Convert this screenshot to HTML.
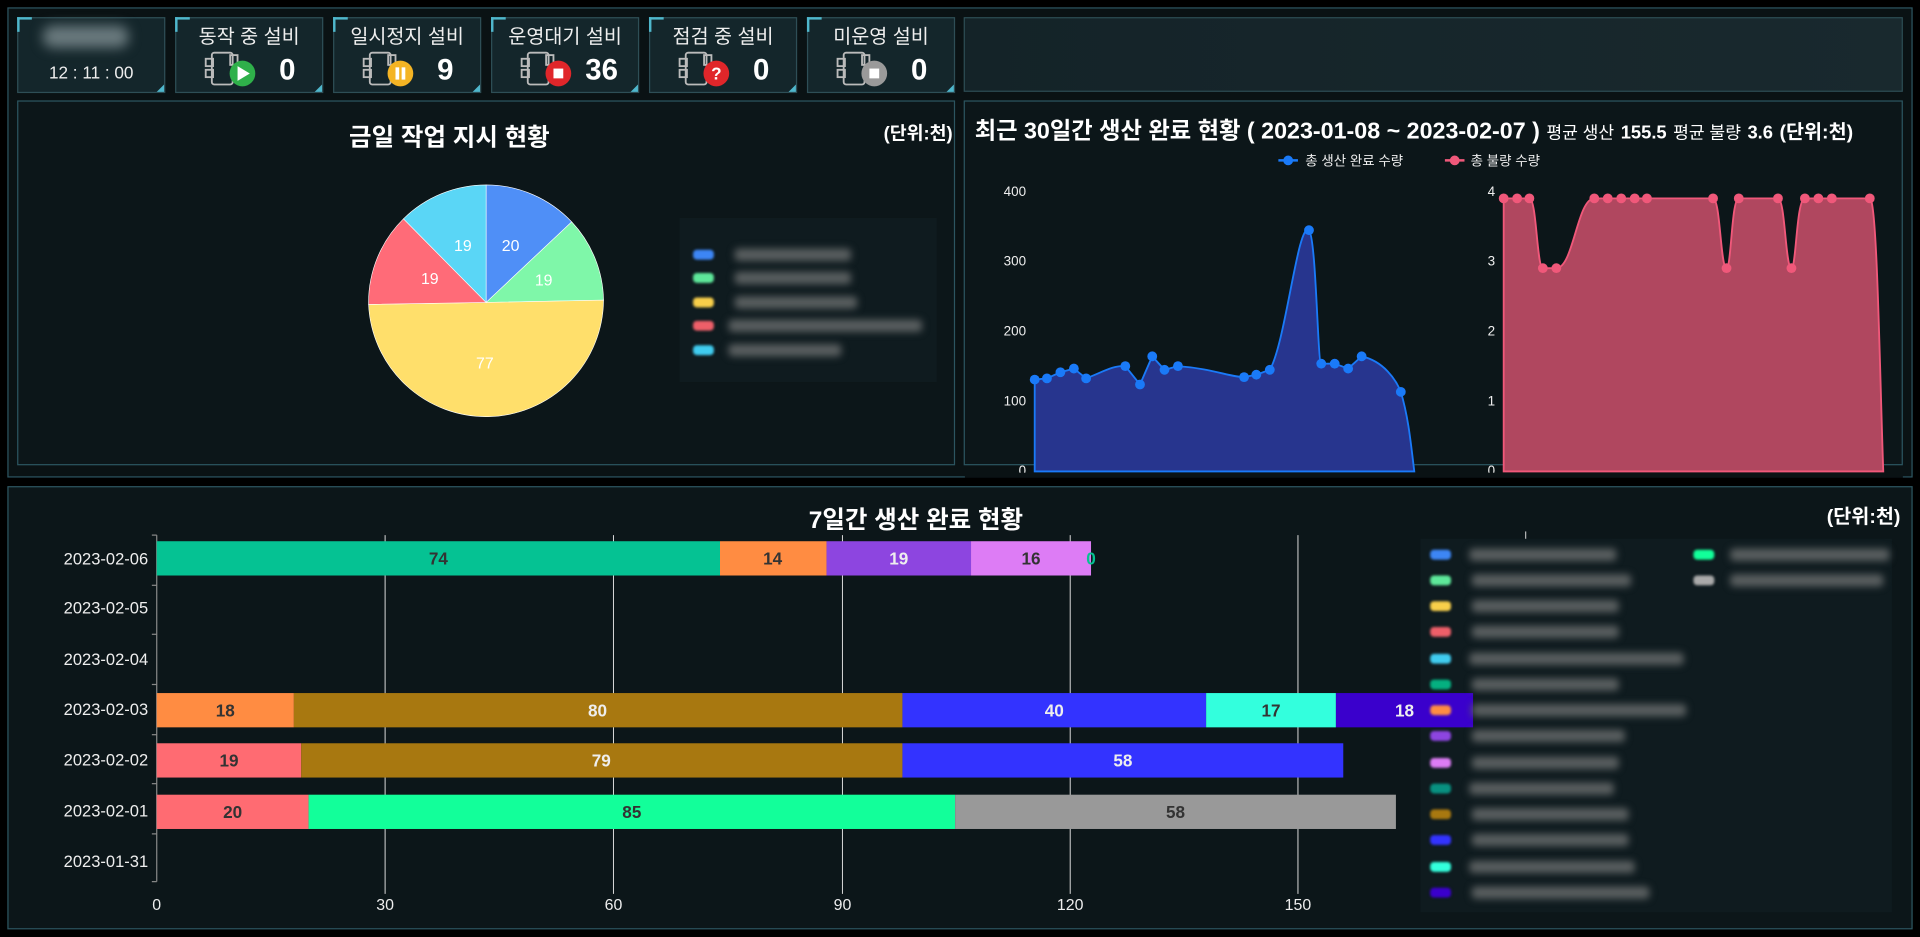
<!DOCTYPE html>
<html><head><meta charset="utf-8"><style>
*{margin:0;padding:0;box-sizing:border-box}
html,body{width:1920px;height:937px;overflow:hidden;background:#000}
#root{position:absolute;left:0;top:0;width:1568px;height:765px;transform:scale(1.22449);transform-origin:0 0;font-family:"Liberation Sans","Noto Sans CJK KR",sans-serif;color:#fff}
.abs{position:absolute}
.panel{position:absolute;border:1px solid #2c5560;background:#0c1619}
.card{position:absolute;top:14px;height:62px;border:1px solid #2e4e56;background:#14262b}
.card:before{content:"";position:absolute;left:-1px;top:-1px;width:10px;height:10px;border-left:2px solid #4fb7cc;border-top:2px solid #4fb7cc}
.card:after{content:"";position:absolute;right:0;bottom:0;border-style:solid;border-width:0 0 6px 6px;border-color:transparent transparent #4fb7cc transparent}
.ct{position:absolute;left:0;right:0;top:1px;text-align:center;font-size:16px;color:#eee}
.cn{position:absolute;top:29px;font-size:24px;font-weight:bold}
.blur{filter:blur(3px);background:#5a5f60;height:10px;border-radius:3px;position:absolute}
.sw{position:absolute;width:17px;height:8px;border-radius:3px;filter:blur(1px)}
</style></head><body><div id="root">
<div class="panel" style="left:6px;top:6px;width:1556px;height:384px;background:#0a1214"></div>
<div class="card" style="left:14px;width:121px">
<div class="abs" style="left:20px;top:6px;width:70px;height:18px;background:#6a7a7e;filter:blur(5px);border-radius:8px"></div>
<div class="abs" style="left:0;right:0;top:36px;text-align:center;font-size:14px;color:#eee">12 : 11 : 00</div></div>
<div class="card" style="left:143px;width:121px"><div class="ct">동작 중 설비</div>
<svg class="abs" style="left:22px;top:26px" width="46" height="32"><g fill="none" stroke="#bbb" stroke-width="1.5"><rect x="7" y="2" width="17" height="26" rx="2"/><rect x="2" y="7" width="6" height="6"/><rect x="2" y="16" width="6" height="6"/><rect x="22" y="4" width="6" height="8"/></g><circle cx="32" cy="19" r="10.5" fill="#2fb04a"/><path d="M28 13 L38 19 L28 25Z" fill="#fff"/></svg><div class="cn" style="left:84px">0</div></div>
<div class="card" style="left:272px;width:121px"><div class="ct">일시정지 설비</div>
<svg class="abs" style="left:22px;top:26px" width="46" height="32"><g fill="none" stroke="#bbb" stroke-width="1.5"><rect x="7" y="2" width="17" height="26" rx="2"/><rect x="2" y="7" width="6" height="6"/><rect x="2" y="16" width="6" height="6"/><rect x="22" y="4" width="6" height="8"/></g><circle cx="32" cy="19" r="10.5" fill="#f4b424"/><rect x="28" y="14" width="3" height="10" fill="#fff"/><rect x="33" y="14" width="3" height="10" fill="#fff"/></svg><div class="cn" style="left:84px">9</div></div>
<div class="card" style="left:401px;width:121px"><div class="ct">운영대기 설비</div>
<svg class="abs" style="left:22px;top:26px" width="46" height="32"><g fill="none" stroke="#bbb" stroke-width="1.5"><rect x="7" y="2" width="17" height="26" rx="2"/><rect x="2" y="7" width="6" height="6"/><rect x="2" y="16" width="6" height="6"/><rect x="22" y="4" width="6" height="8"/></g><circle cx="32" cy="19" r="10.5" fill="#e0262a"/><rect x="28" y="15" width="8" height="8" fill="#fff"/></svg><div class="cn" style="left:76px">36</div></div>
<div class="card" style="left:530px;width:121px"><div class="ct">점검 중 설비</div>
<svg class="abs" style="left:22px;top:26px" width="46" height="32"><g fill="none" stroke="#bbb" stroke-width="1.5"><rect x="7" y="2" width="17" height="26" rx="2"/><rect x="2" y="7" width="6" height="6"/><rect x="2" y="16" width="6" height="6"/><rect x="22" y="4" width="6" height="8"/></g><circle cx="32" cy="19" r="10.5" fill="#e0262a"/><text x="32" y="24" font-size="14" font-weight="bold" fill="#fff" text-anchor="middle" font-family="Liberation Sans">?</text></svg><div class="cn" style="left:84px">0</div></div>
<div class="card" style="left:659px;width:121px"><div class="ct">미운영 설비</div>
<svg class="abs" style="left:22px;top:26px" width="46" height="32"><g fill="none" stroke="#bbb" stroke-width="1.5"><rect x="7" y="2" width="17" height="26" rx="2"/><rect x="2" y="7" width="6" height="6"/><rect x="2" y="16" width="6" height="6"/><rect x="22" y="4" width="6" height="8"/></g><circle cx="32" cy="19" r="10.5" fill="#9a9a9a"/><rect x="28" y="15" width="8" height="8" fill="#fff"/></svg><div class="cn" style="left:84px">0</div></div>
<div class="abs" style="left:787px;top:14px;width:767px;height:61px;border:1px solid #2e4e56;background:linear-gradient(90deg,#142328,#19292e)"></div>

<div class="panel" style="left:14px;top:82px;width:766px;height:298px"></div>
<div class="abs" style="left:14px;width:706px;top:96px;text-align:center;font-size:20px;font-weight:bold">금일 작업 지시 현황</div>
<div class="abs" style="right:790px;top:98px;font-size:15px;font-weight:bold">(단위:천)</div>
<svg class="abs" style="left:0;top:0" width="800" height="380">
<g transform="translate(397,247)" stroke="#fff" stroke-width="0.5">
<path d="M0 0 L0 -96 A96 96 0 0 1 69.9 -65.8Z" fill="#4f8ff7"/>
<path d="M0 0 L69.9 -65.8 A96 96 0 0 1 95.9 -1.9Z" fill="#7ff7a9"/>
<path d="M0 0 L95.9 -1.9 A96 96 0 0 1 -96 1.6Z" fill="#ffdf6b"/>
<path d="M0 0 L-96 1.6 A96 96 0 0 1 -67.5 -68.3Z" fill="#ff6b78"/>
<path d="M0 0 L-67.5 -68.3 A96 96 0 0 1 0 -96Z" fill="#5ad6f6"/>
</g>
<g font-size="13" fill="#fff" text-anchor="middle" font-family="Liberation Sans"><text x="417" y="205">20</text><text x="444" y="233">19</text><text x="396" y="301">77</text><text x="351" y="232">19</text><text x="378" y="205">19</text></g>
</svg>
<div class="abs" style="left:555px;top:178px;width:210px;height:134px;background:#0f1b1f"></div>
<div class="sw" style="left:566px;top:204px;background:#3d86f5"></div><div class="blur" style="left:600px;top:203px;width:95px"></div>
<div class="sw" style="left:566px;top:223px;background:#5ee89a"></div><div class="blur" style="left:600px;top:222px;width:95px"></div>
<div class="sw" style="left:566px;top:243px;background:#f8cf4a"></div><div class="blur" style="left:600px;top:242px;width:100px"></div>
<div class="sw" style="left:566px;top:262px;background:#ee5f69"></div><div class="blur" style="left:595px;top:261px;width:158px"></div>
<div class="sw" style="left:566px;top:282px;background:#40ccef"></div><div class="blur" style="left:595px;top:281px;width:92px"></div>

<div class="panel" style="left:787px;top:82px;width:767px;height:298px"></div>
<div class="abs" style="left:796px;top:92px;font-size:19px;font-weight:bold;white-space:nowrap">최근 30일간 생산 완료 현황 ( 2023-01-08 ~ 2023-02-07 ) <span style="font-size:14px;font-weight:normal">평균 생산</span> <span style="font-size:15px">155.5</span> <span style="font-size:14px;font-weight:normal">평균 불량</span> <span style="font-size:15px">3.6</span> <span style="font-size:16px">(단위:천)</span></div>
<svg class="abs" style="left:0;top:0" width="1568" height="390">
<g font-size="11" fill="#eee" font-family="Liberation Sans"><line x1="1044" y1="131" x2="1060" y2="131" stroke="#1a7af8" stroke-width="2"/><circle cx="1052" cy="131" r="4" fill="#1a7af8"/><text x="1066" y="135">총 생산 완료 수량</text>
<line x1="1180" y1="131" x2="1196" y2="131" stroke="#f0587a" stroke-width="2"/><circle cx="1188" cy="131" r="4" fill="#f0587a"/><text x="1201" y="135">총 불량 수량</text>
<g text-anchor="end"><text x="838" y="160">400</text><text x="838" y="217">300</text><text x="838" y="274">200</text><text x="838" y="331">100</text><text x="838" y="388">0</text>
<text x="1221" y="160">4</text><text x="1221" y="217">3</text><text x="1221" y="274">2</text><text x="1221" y="331">1</text><text x="1221" y="388">0</text></g></g>
<path d="M845 310 L855 309 L866 304 L877 301 L887 309 C900 304 910 298 919 299 L931 314 L941 291 L951 302 L962 299 C990 301 1005 308 1016 308 L1026 306 L1037 302 C1050 280 1060 180 1069 188 C1075 195 1076 297 1079 297 L1090 297 L1101 301 L1112 291 C1130 295 1140 310 1144 320 C1150 340 1152 360 1155 385 L845 385Z" fill="#27358e" stroke="#1a7af8" stroke-width="1.5"/>
<g fill="#1a7af8"><circle cx="845" cy="310" r="4"/><circle cx="855" cy="309" r="4"/><circle cx="866" cy="304" r="4"/><circle cx="877" cy="301" r="4"/><circle cx="887" cy="309" r="4"/><circle cx="919" cy="299" r="4"/><circle cx="931" cy="314" r="4"/><circle cx="941" cy="291" r="4"/><circle cx="951" cy="302" r="4"/><circle cx="962" cy="299" r="4"/><circle cx="1016" cy="308" r="4"/><circle cx="1026" cy="306" r="4"/><circle cx="1037" cy="302" r="4"/><circle cx="1069" cy="188" r="4"/><circle cx="1079" cy="297" r="4"/><circle cx="1090" cy="297" r="4"/><circle cx="1101" cy="301" r="4"/><circle cx="1112" cy="291" r="4"/><circle cx="1144" cy="320" r="4"/></g>
<path d="M1228 162 L1249 162 C1255 162 1255 219 1260 219 L1271 219 C1285 219 1288 162 1302 162 L1399 162 C1405 162 1405 219 1410 219 C1414 219 1414 162 1420 162 L1452 162 C1458 162 1458 219 1463 219 C1467 219 1467 162 1474 162 L1527 162 C1533 162 1535 300 1538 385 L1228 385Z" fill="#b0475f" stroke="#f0587a" stroke-width="1.5"/>
<g fill="#f0587a"><circle cx="1228" cy="162" r="4"/><circle cx="1239" cy="162" r="4"/><circle cx="1249" cy="162" r="4"/><circle cx="1260" cy="219" r="4"/><circle cx="1271" cy="219" r="4"/><circle cx="1302" cy="162" r="4"/><circle cx="1313" cy="162" r="4"/><circle cx="1324" cy="162" r="4"/><circle cx="1335" cy="162" r="4"/><circle cx="1345" cy="162" r="4"/><circle cx="1399" cy="162" r="4"/><circle cx="1410" cy="219" r="4"/><circle cx="1420" cy="162" r="4"/><circle cx="1452" cy="162" r="4"/><circle cx="1463" cy="219" r="4"/><circle cx="1474" cy="162" r="4"/><circle cx="1485" cy="162" r="4"/><circle cx="1496" cy="162" r="4"/><circle cx="1527" cy="162" r="4"/></g>
<rect x="788" y="386" width="766" height="5" fill="#0a1214"/>
</svg>

<div class="panel" style="left:6px;top:397px;width:1556px;height:362px"></div>
<div class="abs" style="left:1160px;top:440px;width:385px;height:305px;background:#0f1b1f"></div>
<div class="abs" style="left:0;width:1496px;top:408px;text-align:center;font-size:20px;font-weight:bold">7일간 생산 완료 현황</div>
<div class="abs" style="right:16px;top:408px;font-size:16px;font-weight:bold">(단위:천)</div>
<svg class="abs" style="left:0;top:0" width="1568" height="765" font-family="Liberation Sans">
<g stroke="#ddd" stroke-width="0.8"><line x1="314.5" y1="437" x2="314.5" y2="730"/><line x1="501" y1="437" x2="501" y2="730"/><line x1="688" y1="437" x2="688" y2="730"/><line x1="874" y1="437" x2="874" y2="730"/><line x1="1060" y1="437" x2="1060" y2="730"/><line x1="1246" y1="434" x2="1246" y2="440"/></g>
<g stroke="#888"><line x1="128" y1="437" x2="128" y2="720"/><line x1="124" y1="437" x2="128" y2="437"/><line x1="124" y1="478" x2="128" y2="478"/><line x1="124" y1="518" x2="128" y2="518"/><line x1="124" y1="559" x2="128" y2="559"/><line x1="124" y1="600" x2="128" y2="600"/><line x1="124" y1="640" x2="128" y2="640"/><line x1="124" y1="681" x2="128" y2="681"/><line x1="124" y1="720" x2="128" y2="720"/></g>
<g font-size="13.5" fill="#eee" text-anchor="end"><text x="121" y="461">2023-02-06</text><text x="121" y="501">2023-02-05</text><text x="121" y="543">2023-02-04</text><text x="121" y="584">2023-02-03</text><text x="121" y="625">2023-02-02</text><text x="121" y="667">2023-02-01</text><text x="121" y="708">2023-01-31</text></g>
<g font-size="13" fill="#eee" text-anchor="middle"><text x="128" y="743">0</text><text x="314.5" y="743">30</text><text x="501" y="743">60</text><text x="688" y="743">90</text><text x="874" y="743">120</text><text x="1060" y="743">150</text></g>
<rect x="128" y="442" width="460" height="28" fill="#05c293"/><rect x="588" y="442" width="87" height="28" fill="#ff8c42"/><rect x="675" y="442" width="118" height="28" fill="#8d45e0"/><rect x="793" y="442" width="98" height="28" fill="#dd7cf5"/>
<rect x="128" y="566" width="112" height="28" fill="#ff8c42"/><rect x="240" y="566" width="497" height="28" fill="#a87810"/><rect x="737" y="566" width="248" height="28" fill="#3333ff"/><rect x="985" y="566" width="106" height="28" fill="#33ffdd"/><rect x="1091" y="566" width="112" height="28" fill="#3a00cc"/>
<rect x="128" y="607" width="118" height="28" fill="#ff6b72"/><rect x="246" y="607" width="491" height="28" fill="#a87810"/><rect x="737" y="607" width="360" height="28" fill="#3333ff"/>
<rect x="128" y="649" width="124" height="28" fill="#ff6b72"/><rect x="252" y="649" width="528" height="28" fill="#12ff9a"/><rect x="780" y="649" width="360" height="28" fill="#999"/>
<g font-size="14" font-weight="bold" text-anchor="middle"><text x="358" y="461" fill="#333">74</text><text x="631" y="461" fill="#333">14</text><text x="734" y="461" fill="#eee">19</text><text x="842" y="461" fill="#333">16</text><text x="891" y="461" fill="#05c293">0</text>
<text x="184" y="585" fill="#333">18</text><text x="488" y="585" fill="#eee">80</text><text x="861" y="585" fill="#eee">40</text><text x="1038" y="585" fill="#333">17</text><text x="1147" y="585" fill="#eee">18</text>
<text x="187" y="626" fill="#333">19</text><text x="491" y="626" fill="#eee">79</text><text x="917" y="626" fill="#eee">58</text>
<text x="190" y="668" fill="#333">20</text><text x="516" y="668" fill="#333">85</text><text x="960" y="668" fill="#333">58</text></g>
</svg>
<div class="sw" style="left:1168px;top:449px;background:#3d86f5"></div><div class="blur" style="left:1200px;top:448px;width:120px"></div>
<div class="sw" style="left:1168px;top:470px;background:#5ee89a"></div><div class="blur" style="left:1202px;top:469px;width:130px"></div>
<div class="sw" style="left:1168px;top:491px;background:#f8cf4a"></div><div class="blur" style="left:1202px;top:490px;width:120px"></div>
<div class="sw" style="left:1168px;top:512px;background:#ee5f69"></div><div class="blur" style="left:1202px;top:511px;width:120px"></div>
<div class="sw" style="left:1168px;top:534px;background:#40ccef"></div><div class="blur" style="left:1200px;top:533px;width:175px"></div>
<div class="sw" style="left:1168px;top:555px;background:#05b080"></div><div class="blur" style="left:1202px;top:554px;width:120px"></div>
<div class="sw" style="left:1168px;top:576px;background:#ff8c42"></div><div class="blur" style="left:1202px;top:575px;width:175px"></div>
<div class="sw" style="left:1168px;top:597px;background:#8d45e0"></div><div class="blur" style="left:1202px;top:596px;width:125px"></div>
<div class="sw" style="left:1168px;top:619px;background:#dd7cf5"></div><div class="blur" style="left:1202px;top:618px;width:120px"></div>
<div class="sw" style="left:1168px;top:640px;background:#089080"></div><div class="blur" style="left:1200px;top:639px;width:118px"></div>
<div class="sw" style="left:1168px;top:661px;background:#a87810"></div><div class="blur" style="left:1202px;top:660px;width:128px"></div>
<div class="sw" style="left:1168px;top:682px;background:#3333ff"></div><div class="blur" style="left:1202px;top:681px;width:128px"></div>
<div class="sw" style="left:1168px;top:704px;background:#33ffdd"></div><div class="blur" style="left:1200px;top:703px;width:135px"></div>
<div class="sw" style="left:1168px;top:725px;background:#3a00cc"></div><div class="blur" style="left:1202px;top:724px;width:145px"></div>
<div class="sw" style="left:1383px;top:449px;background:#12ff9a"></div><div class="blur" style="left:1413px;top:448px;width:130px"></div>
<div class="sw" style="left:1383px;top:470px;background:#aaa"></div><div class="blur" style="left:1413px;top:469px;width:125px"></div>
</div></body></html>
